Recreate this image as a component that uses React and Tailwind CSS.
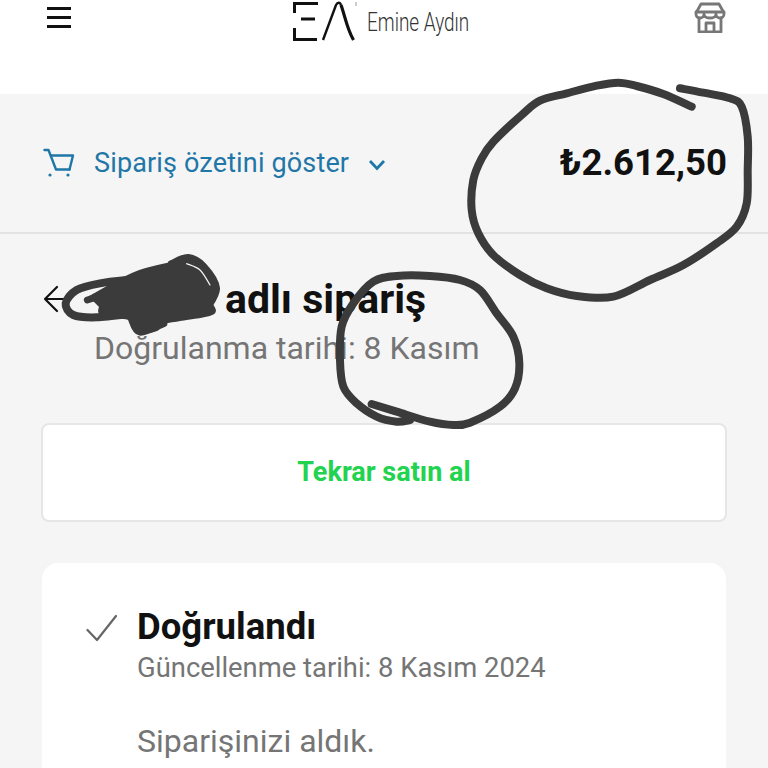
const smooth = (p) => {
  let d = `M${p[0][0]} ${p[0][1]}`;
  for (let i = 0; i < p.length - 1; i++) {
    const a = p[Math.max(i - 1, 0)], b = p[i], c = p[i + 1], e = p[Math.min(i + 2, p.length - 1)];
    d += ` C${b[0] + (c[0] - a[0]) / 6} ${b[1] + (c[1] - a[1]) / 6} ${c[0] - (e[0] - b[0]) / 6} ${c[1] - (e[1] - b[1]) / 6} ${c[0]} ${c[1]}`;
  }
  return d;
};

const big = [[691.7,106.7],[663.3,94],[636.7,86],[618.3,82.7],[596.7,85.7],[566.7,93.3],[540,100.7],[521.7,115],[493.3,141.7],[481.7,158.3],[473.3,180],[471.7,210],[478.3,233.3],[493.3,255],[520,275],[546.7,288.3],[576.7,296],[613.3,296.7],[650,280],[683.3,265],[716.7,243.3],[736.7,226.7],[746.7,203.3],[747.7,170],[747.7,136.7],[741.7,106.7],[730,98.3],[703.3,92.7],[680,88.3]];
const z2 = (a) => a.map(([x, y]) => [320 + x / 3, 260 + y / 3]);
const z1 = (a) => a.map(([x, y]) => [x / 3, 120 + y / 3]);
const mid = z2([[155,432],[230,455],[330,485],[400,495],[450,488],[540,440],[585,385],[598,310],[580,230],[530,160],[480,90],[420,60],[330,48],[230,48],[160,65],[100,130],[65,200],[60,300],[70,380],[110,430],[170,470],[230,485],[270,480]]);
const blob = z1([[270,530],[400,460],[510,430],[560,425],[620,460],[640,510],[630,540],[640,580],[540,600],[490,610],[470,630],[420,635],[395,600],[340,590],[300,580],[300,560]]);
const loop = z1([[400,478],[300,490],[230,510],[197,550],[220,585],[290,592],[400,580]]);
const top = z1([[515,432],[565,414],[610,440],[648,505],[620,565]]);
const low = z1([[395,595],[420,635],[490,610]]);
const sliver = z1([[560,431],[600,450],[630,495]]);

function Scribbles() {
  return (
    <svg className="absolute left-0 top-0 pointer-events-none" width="768" height="768" fill="none" stroke="#3b3b3b" strokeLinecap="round" strokeLinejoin="round">
      <path d={smooth(big)} strokeWidth="8" />
      <path d={smooth(mid)} strokeWidth="8" />
      <path d={smooth(blob) + "Z"} fill="#3b3b3b" strokeWidth="2" />
      <path d={smooth(loop)} strokeWidth="8" />
      <path d={smooth(top)} strokeWidth="8" />
      <path d={smooth(low)} strokeWidth="8" />
      <path d={smooth(sliver)} stroke="#f5f5f5" strokeWidth="1.2" />
      <path d={smooth(z1([[262,540],[300,528]]))} strokeWidth="7" />
    </svg>
  );
}

function Logo() {
  return (
    <div className="flex items-start">
      <svg width="64" height="42" viewBox="0 0 64 42" className="mt-px shrink-0" fill="none" stroke="#111" strokeLinecap="butt">
        <path d="M1.5 12V2.5H25" strokeWidth="3" />
        <path d="M8 18H22" strokeWidth="3" />
        <path d="M1.5 27V38.5H24" strokeWidth="3" />
        <path d="M30 39L43 4C44.5 1 47 1 48 4" strokeWidth="2.4" />
        <path d="M48 4C52 15 54 28 60.5 39" strokeWidth="3.2" />
        <path d="M63 1V5" stroke="#999" strokeWidth="1" />
      </svg>
      <span className="ml-[10px] mt-[5px] w-[104px] origin-left scale-x-[.73] whitespace-nowrap text-[26px] font-light leading-[34px] text-[#333]">
        Emine Aydın
      </span>
    </div>
  );
}

export default function App() {
  return (
    <div className="relative h-[768px] w-[768px] overflow-hidden bg-[#f5f5f5] font-['Roboto',sans-serif]">
      <header className="flex h-[94px] items-start justify-between bg-white pl-[47px] pr-[42px]">
        <div className="mt-[7px] flex w-6 flex-col gap-[6px]">
          <div className="h-[3px] bg-[#111]" />
          <div className="h-[3px] bg-[#111]" />
          <div className="h-[3px] bg-[#111]" />
        </div>
        <div className="ml-[-2px]"><Logo /></div>
        <svg width="32" height="32" viewBox="0 0 32 32" className="mt-[1px]" fill="none" stroke="#777" strokeWidth="2.8" strokeLinejoin="round" strokeLinecap="round">
          <path d="M7 3H25L30 12V13C30 15.5 28 17 26 17C24 17 22 15.5 22 13C22 15.5 19 17 16 17C13 17 10 15.5 10 13C10 15.5 8 17 6 17C3.5 17 2 15.5 2 13V12Z" />
          <path d="M2 11H30" />
          <path d="M5 17V31H27V17" />
          <path d="M12 31V22H20V31" />
        </svg>
      </header>

      <section className="flex h-[140px] items-center justify-between border-b-2 border-[#e2e2e2] pl-[43px] pr-[41px]">
        <div className="flex items-center text-[#1f77a8]">
          <svg width="32" height="30" viewBox="0 0 32 30" fill="none" stroke="currentColor" strokeWidth="2.4" strokeLinejoin="round" strokeLinecap="round">
            <path d="M1.5 2H5.5L13 21.5H26.5" />
            <path d="M8 7.5H30L26.5 21.5" />
            <circle cx="7" cy="27" r="1.6" fill="currentColor" stroke="none" />
            <circle cx="25" cy="27" r="1.6" fill="currentColor" stroke="none" />
          </svg>
          <span className="ml-[19px] text-[27px] leading-8 tracking-[0.15px]">Sipariş özetini göster</span>
          <svg width="18" height="12" viewBox="0 0 18 12" className="ml-[19px] mt-1" fill="none" stroke="currentColor" strokeWidth="2.8">
            <path d="M2 2L9 9.5L16 2" />
          </svg>
        </div>
        <span className="text-[36.6px] font-bold leading-10 text-[#111]">₺2.612,50</span>
      </section>

      <main className="px-[41px]">
        <div className="mt-[43px] flex items-start">
          <svg width="30" height="30" viewBox="0 0 30 30" className="ml-[2px] mt-[8px] shrink-0" fill="none" stroke="#111" strokeWidth="2.2" strokeLinecap="round" strokeLinejoin="round">
            <path d="M14 2L2 14L14 26M2 14H26" />
          </svg>
          <div className="ml-[21px]">
            <h1 className="pl-[131px] text-[41px] font-bold leading-[44px] text-[#111]">adlı sipariş</h1>
            <p className="mt-[9px] text-[32px] leading-9 text-[#757575]">Doğrulanma tarihi: 8 Kasım</p>
          </div>
        </div>

        <button className="mt-[57px] flex h-[99px] w-[686px] items-center justify-center rounded-[8px] border-2 border-[#e6e6e6] bg-white text-[27px] font-bold text-[#22d34f]">
          Tekrar satın al
        </button>

        <div className="mt-[41px] ml-px flex h-[300px] w-[684px] items-start rounded-[16px] bg-white pl-[44px] pt-[42px]">
          <svg width="32" height="28" viewBox="0 0 32 28" className="mt-[9px] shrink-0" fill="none" stroke="#666" strokeWidth="2.2" strokeLinecap="round" strokeLinejoin="round">
            <path d="M1.5 16L11 26L30 2" />
          </svg>
          <div className="ml-[19px]">
            <h2 className="text-[36.5px] font-bold leading-[44px] text-[#111]">Doğrulandı</h2>
            <p className="mt-[3px] text-[27.4px] leading-8 text-[#757575]">Güncellenme tarihi: 8 Kasım 2024</p>
            <p className="mt-[37px] text-[32px] leading-10 text-[#757575]">Siparişinizi aldık.</p>
          </div>
        </div>
      </main>

      <Scribbles />
    </div>
  );
}
